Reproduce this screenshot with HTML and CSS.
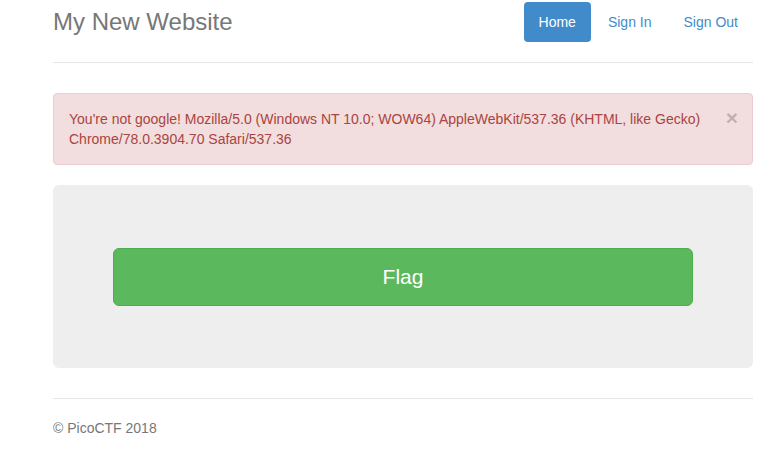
FILE: index.html
```html
<!DOCTYPE html>
<html>
<head>
<meta charset="utf-8">
<title>My New Website</title>
<link rel="stylesheet" href="styles.css">
</head>
<body>
<div class="container">
  <div class="header">
    <h3 class="brand">My New Website</h3>
    <ul class="nav">
      <li class="active"><a href="#">Home</a></li>
      <li><a href="#">Sign In</a></li>
      <li><a href="#">Sign Out</a></li>
    </ul>
  </div>
  <div class="alert">
    <span class="close">×</span>
    You're not google! Mozilla/5.0 (Windows NT 10.0; WOW64) AppleWebKit/537.36 (KHTML, like Gecko) Chrome/78.0.3904.70 Safari/537.36
  </div>
  <div class="jumbotron">
    <a class="btn" href="#">Flag</a>
  </div>
  <div class="footer">
    <p>© PicoCTF 2018</p>
  </div>
</div>
</body>
</html>
```
FILE: styles.css
```css
* { box-sizing: border-box; }
html, body { margin: 0; padding: 0; background: #fff; }
body {
  font-family: "Liberation Sans", Arial, sans-serif;
  font-size: 14px;
  line-height: 20px;
  color: #333;
}
.container {
  width: 700px;
  margin-left: 53px;
  padding-top: 2px;
}
.header {
  display: flex;
  justify-content: space-between;
  align-items: flex-start;
  padding-bottom: 20px;
  border-bottom: 1px solid #e5e5e5;
  margin-bottom: 30px;
}
.brand {
  margin: 0;
  font-size: 24px;
  font-weight: 500;
  line-height: 40px;
  color: #777;
}
.nav {
  list-style: none;
  margin: 0;
  padding: 0;
  display: flex;
  gap: 2px;
}
.nav a {
  display: block;
  padding: 10px 15px;
  line-height: 20px;
  color: #428bca;
  text-decoration: none;
  border-radius: 4px;
}
.nav .active a {
  background: #428bca;
  color: #fff;
}
.alert {
  position: relative;
  padding: 15px 35px 15px 15px;
  background: #f2dede;
  border: 1px solid #ebccd1;
  border-radius: 4px;
  color: #a94442;
  margin-bottom: 20px;
}
.close {
  float: right;
  position: relative;
  top: -2px;
  right: -21px;
  font-size: 21px;
  font-weight: bold;
  line-height: 1;
  color: #000;
  opacity: 0.2;
}
.jumbotron {
  background: #eee;
  border-radius: 6px;
  padding: 63px 60px 62px;
  margin-bottom: 30px;
}
.btn {
  display: block;
  text-align: center;
  padding: 14px 24px;
  font-size: 21px;
  line-height: 28px;
  color: #fff;
  background: #5cb85c;
  border: 1px solid #4cae4c;
  border-radius: 6px;
  text-decoration: none;
}
.footer {
  border-top: 1px solid #e5e5e5;
  padding-top: 19px;
  color: #777;
}
.footer p { margin: 0; }
```
